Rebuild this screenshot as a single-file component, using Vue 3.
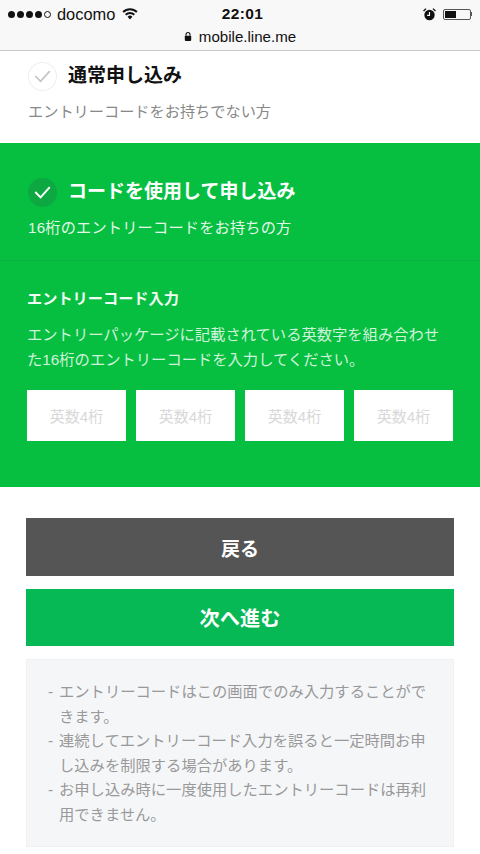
<script setup>
const codes = [1, 2, 3, 4]
const notes = [
  'エントリーコードはこの画面でのみ入力することができます。',
  '連続してエントリーコード入力を誤ると一定時間お申し込みを制限する場合があります。',
  'お申し込み時に一度使用したエントリーコードは再利用できません。'
]
</script>

<template>
  <div class="page">
    <header class="browser">
      <div class="status">
        <div class="left">
          <span class="signal"><i></i><i></i><i></i><i></i><i class="off"></i></span>
          <span class="carrier">docomo</span>
          <svg class="wifi" viewBox="0 0 16 12" width="16" height="12"><path d="M8 11.5 5.6 8.8a3.4 3.4 0 0 1 4.8 0zM4.3 7.5 3 6a7 7 0 0 1 10 0l-1.300 1.500a5.200 5.200 0 0 0-7.400 0zM1.800 4.800.4 3.300a10.800 10.800 0 0 1 15.200 0l-1.400 1.500a8.800 8.800 0 0 0-12.400 0z" fill="#111"/></svg>
        </div>
        <div class="time">22:01</div>
        <div class="right">
          <svg class="alarm" viewBox="0 0 12 12" width="13" height="13"><circle cx="6" cy="6.500" r="4.800" fill="#111"/><path d="M6 3.800v3H3.800" stroke="#fff" stroke-width="1" fill="none"/><path d="M.5 2.800 2.800.6M11.500 2.800 9.200.6" stroke="#111" stroke-width="1.200"/></svg>
          <span class="battery"><span class="level"></span></span><span class="cap"></span>
        </div>
      </div>
      <div class="url">
        <svg viewBox="0 0 10 12" width="8" height="11"><path d="M2.500 5V3.500a2.500 2.500 0 0 1 5 0V5" stroke="#111" stroke-width="1.400" fill="none"/><rect x="1" y="5" width="8" height="6.500" rx="1" fill="#111"/></svg>
        <span>mobile.line.me</span>
      </div>
    </header>

    <section class="plain">
      <div class="option-head">
        <span class="tick tick-off">
          <svg viewBox="0 0 30 30" width="30" height="30"><path d="M7.500 15 13 20.500 22.500 10" stroke="#c4c4c4" stroke-width="1.800" fill="none"/></svg>
        </span>
        <h2>通常申し込み</h2>
      </div>
      <p class="sub">エントリーコードをお持ちでない方</p>
    </section>

    <section class="green">
      <div class="selected">
        <div class="option-head">
          <span class="tick tick-on">
            <svg viewBox="0 0 30 30" width="30" height="30"><path d="M7.500 15 13 20.500 22.500 10" stroke="#fff" stroke-width="2" fill="none"/></svg>
          </span>
          <h2>コードを使用して申し込み</h2>
        </div>
        <p class="sub">16桁のエントリーコードをお持ちの方</p>
      </div>
      <div class="entry">
        <h3>エントリーコード入力</h3>
        <p class="desc">エントリーパッケージに記載されている英数字を組み合わせた16桁のエントリーコードを入力してください。</p>
        <div class="codes">
          <div v-for="c in codes" :key="c" class="code">英数4桁</div>
        </div>
      </div>
    </section>

    <div class="actions">
      <button class="btn back">戻る</button>
      <button class="btn next">次へ進む</button>
      <ul class="notes">
        <li v-for="n in notes" :key="n">{{ n }}</li>
      </ul>
    </div>
  </div>
</template>

<style>
html, body { margin: 0; background: #fff; }
</style>

<style scoped>
.page {
  width: 480px;
  height: 854px;
  overflow: hidden;
  background: #fff;
  font-family: "Liberation Sans", "Noto Sans CJK JP", sans-serif;
}
.browser {
  height: 50px;
  background: #f8f8f8;
  border-bottom: 1px solid #c9c9c9;
  color: #111;
}
.status {
  height: 26px;
  display: grid;
  grid-template-columns: 1fr auto 1fr;
  align-items: center;
  padding: 1px 8px 0 8px;
}
.left { display: flex; align-items: center; }
.signal { display: flex; gap: 2px; }
.signal i { width: 7px; height: 7px; border-radius: 50%; background: #111; box-sizing: border-box; }
.signal i.off { background: none; border: 1px solid #111; }
.carrier { font-size: 16.400px; margin-left: 6px; }
.wifi { margin-left: 7px; }
.time { font-size: 15.500px; font-weight: 700; letter-spacing: .4px; padding-left: 5px; }
.right { display: flex; align-items: center; justify-content: flex-end; }
.alarm { margin-right: 7px; }
.battery { width: 28px; height: 11px; border: 1px solid #555; border-radius: 2px; padding: 1px; box-sizing: border-box; display: flex; }
.level { width: 11px; background: #111; }
.cap { width: 1.500px; height: 4px; background: #555; }
.url {
  display: flex;
  justify-content: center;
  align-items: center;
  gap: 7px;
  font-size: 15.100px;
  height: 18px;
}
.plain { height: 92px; padding: 0 28px; box-sizing: border-box; }
.option-head { display: flex; align-items: center; gap: 11px; }
.plain .option-head { padding-top: 10px; }
.plain .sub { margin-top: 9px; }
.tick { width: 29px; height: 29px; border-radius: 50%; display: flex; align-items: center; justify-content: center; flex: none; }
.tick-off { box-shadow: inset 0 0 0 1px #eee; }
.tick-on { background: #0ea843; }
h2 { margin: 0; font-size: 19px; font-weight: 700; line-height: 30px; color: #111; }
.sub { margin: 10px 0 0; font-size: 15.200px; line-height: 24px; color: #888; }
.green { background: #06bf41; height: 344px; color: #fff; }
.selected { height: 118px; padding: 34px 28px 0; box-sizing: border-box; border-bottom: 1px solid #0db146; }
.selected h2 { color: #fff; }
.selected .sub { color: #e3f7e9; margin-top: 9px; letter-spacing: .2px; }
.entry { padding: 27px 27px 0; }
h3 { margin: 0; font-size: 15.200px; line-height: 22px; font-weight: 700; color: #f2fcf5; }
.desc { margin: 13px 0 0; font-size: 15.300px; line-height: 24.500px; color: #cff2da; }
.codes { display: flex; gap: 10px; margin-top: 18px; }
.code {
  width: 99px;
  height: 51px;
  background: #fff;
  color: #d8d8d8;
  font-size: 15px;
  display: flex;
  align-items: center;
  justify-content: center;
}
.actions { padding: 31px 26px 0; }
.btn {
  display: block;
  width: 428px;
  height: 57px;
  border: 0;
  padding: 0;
  color: #fff;
  font: 700 19px "Liberation Sans", "Noto Sans CJK JP", sans-serif;
}
.back { background: #555; height: 58px; }
.next { background: #06b955; margin-top: 13px; font-size: 20.200px; }
.notes {
  list-style: none;
  margin: 13px 0 0;
  padding: 20px 26px 19px 32px;
  background: #f5f6f8;
  border: 1px solid #eef0f2;
  font-size: 15.300px;
  line-height: 24.500px;
  color: #999;
}
.notes li { position: relative; }
.notes li::before { content: "-"; position: absolute; left: -11px; }
</style>
